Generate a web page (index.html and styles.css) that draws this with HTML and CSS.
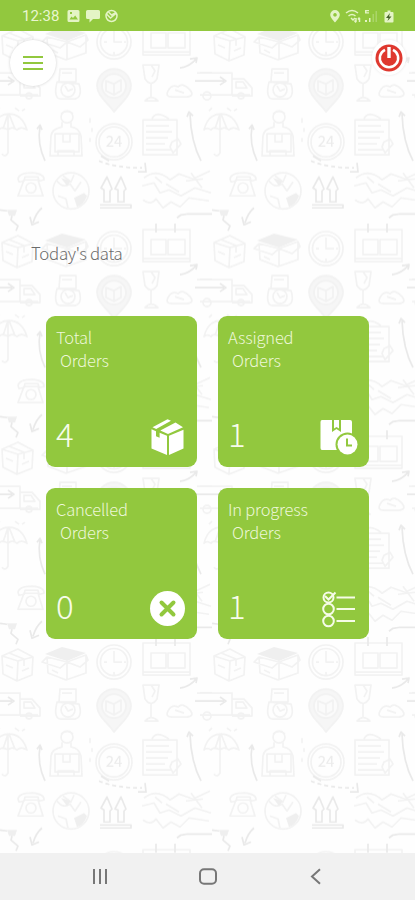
FILE: index.html
```html
<!DOCTYPE html>
<html lang="en">
<head>
<meta charset="utf-8">
<meta name="viewport" content="width=device-width, initial-scale=1">
<title>Today's data</title>
<link rel="stylesheet" href="styles.css">
</head>
<body>
<div class="screen">
  <svg class="wallpaper" width="415" height="900" aria-hidden="true">
    <defs>
      <g id="doodles">
        <path d="M2 16 18 9 33 17 32 35 17 41 3 34ZM2 16 18 21 33 17M18 21 17 41M9 13 24 19v7M6 25l7 3M22 31l7-3"/>
        <path d="M47 17 67 22 86 15v18L66 40 48 33ZM67 22v18M47 17 42 22 60 28 67 22 80 27 88 20 86 15M52 30l6 3"/>
        <path class="fill" d="M45 14 62 7 86 13 67 21Z"/>
        <circle cx="114" cy="22" r="17"/><circle cx="114" cy="22" r="13.5"/><path d="M114 11v11h8M104 22h3M114 32v3M124 22h2"/>
        <path d="M143 3h47v32h-47ZM151 13h15v15h-15ZM168 13h17v15h-17ZM143 32h47"/><path class="dark" d="M156-3v9M175-3v9"/>
        <path class="dark" d="M180 48q10-1 17-10M190 39l7-1-1 5"/>
        <path class="dark" d="M0 61h12M8 57l6 4-6 4M195 61h17M200 53h12"/>
        <path d="M-15 53H20v22h-32M20 59h12l8 9v8H20M24 62h7l4 6h-11ZM-10 75H38"/><circle cx="29" cy="76" r="3"/><circle cx="-5" cy="76" r="4"/>
        <path d="M60 49h16v13H59ZM57 62q-4 17 4 17h14q8-2 4-15ZM62 53h10"/><circle cx="68" cy="70" r="7"/><path d="M65 66l3 5 5-2"/>
        <path class="shade" d="M114 92C108 83 97 76 97 66A17 17 0 0 1 131 66C131 76 120 84 114 92Z"/><circle class="paper" cx="114" cy="66" r="12"/><path d="M106 61l8 3 7-4v11l-7 4-8-4ZM114 64v11"/>
        <path d="M143 45h16l-2 14q-6 9-12 0ZM151 64v13M145 81q6-7 13 0ZM151 45l4 6-3 6"/>
        <path d="M168 71q4-7 10-4 5-5 12 3 5 6-3 7h-15q-7 0-4-6ZM175 70l9 3"/>
        <path d="M-8 110Q-4 94 9 94T27 110Q21 106 17 110 12 106 8 110 2 106-1 110-5 107-8 110ZM8 94v39q-3 5-6 1M8 94l-5 15M9 94l6 15M15 88l4 3M-3 91l3-3M22 91l3-2"/>
        <path class="dark" d="M45 141Q37 124 40 106M37 109l3-4 2 5"/>
        <circle cx="67" cy="97" r="6"/><path d="M61 94q7-5 12 0M62 102v5q-10 2-11 9l-1 20h32l-1-20q-2-8-10-9v-5M55 114h24v18H55ZM63 114v8h7v-8M58 136v-5h16v5"/>
        <path d="M90 98v5M92 108v4M90 118v4"/>
        <circle cx="114" cy="122" r="18"/><circle cx="114" cy="122" r="15"/><text x="114" y="127">24</text><path class="dark" d="M101 136l8 5"/>
        <path d="M143 100h34v35h-34ZM152 99q4-9 17 0M146 106h23M146 112h26M146 118h22M146 124h19M146 130h25M172 122l6-3 3 5-8 9-3-6Z"/>
        <path class="dark" d="M201 141Q191 122 190 94M187 97l2-5 4 4"/>
        <path class="dark" stroke-dasharray="4 3" d="M99 141q16 7 43 7"/><path class="dark" d="M145 143l1 9h-8"/>
        <path d="M18 159q1-6 14-6 13 1 12 7l-5 1-1-4H25l-1 4-5 1ZM24 160h14l5 16H18Z"/><circle cx="31" cy="168" r="5"/>
        <circle cx="71" cy="171" r="18"/><path d="M57 161q6 8 13 3l5 7 6-9M58 176l8 3 2 9M63 156l8 6 3-7"/><path class="fill" d="M74 178l10-5 3 3q-3 9-10 11ZM61 158l10 3-4 5Z"/>
        <path class="dark" d="M104 182V170l-3-2 6-11 5 12-2 2v11ZM118 182v-12l-3-1 6-12 5 12-2 2v11ZM100 185h31v3h-31"/>
        <path d="M144 158q13-10 26 2l9-6 14 5 17-8M142 166l12-3 6 10 9-3 12 6 14-8 16 5M143 180q8 6 13-1l7 9 8-6 9 5 9-9 20 3M166 164l13 8M155 157l7 6M186 161l17-2M191 153l11 15"/>
        <path class="fill" d="M7 190h10l-2 6h-6Z"/><path class="dark" d="M12 196l-1 4 7 6-2 5M0 190l7 1"/>
        <path class="dark" d="M42 188Q36 193 33 203M30 197l2 8 7-3"/>
        <path class="dark" d="M177 198l4-3 7-1h24"/>
      </g>
      <pattern id="tile" x="0" y="640" width="212" height="206.7" patternUnits="userSpaceOnUse">
        <use href="#doodles"/><use href="#doodles" x="212"/><use href="#doodles" x="-212"/>
        <use href="#doodles" y="206.7"/><use href="#doodles" y="-206.7"/>
      </pattern>
    </defs>
    <rect width="415" height="900" fill="url(#tile)"/>
  </svg>

  <header class="status">
    <span class="clock">12:38</span>
    <svg class="status-left" width="54" height="14" viewBox="0 0 54 14">
      <path fill-rule="evenodd" d="M2 1h9q1.500 0 1.500 1.500v9Q12.500 13 11 13H2Q.5 13 .5 11.500v-9Q.5 1 2 1ZM2.500 10.500h8.500L8.200 6.500 6 9 4.500 7.500ZM3 3v2h2V3Z"/>
      <path d="M20.500 1h11q1.500 0 1.500 1.500v6q0 1.500-1.500 1.500H26l-3.500 3.500V10h-2Q19 10 19 8.500v-6Q19 1 20.500 1Z"/>
      <circle class="line" cx="44.500" cy="7" r="5.500"/><path class="line" d="M39.500 5l4 4 6-5M41.500 3l3 3 4-2"/>
    </svg>
    <svg class="status-right" width="68" height="16" viewBox="0 0 68 16">
      <path fill-rule="evenodd" d="M6 2a4.800 4.800 0 0 1 4.800 4.800C10.800 10 6 14.500 6 14.500S1.200 10 1.200 6.800A4.800 4.800 0 0 1 6 2ZM6 5a1.800 1.800 0 1 0 .01 0Z"/>
      <path class="line" d="M17 5q6-5 12 0M19.500 8q3.500-3 7 0M22 10l2 2 2-2M27 10v4M25.500 12.500l1.500 2M30.500 14v-4M29 11.500l1.500-2"/>
      <path d="M36 2h4v1.200h-2.500v1H40v1.200h-4ZM36 12h2v2h-2ZM40 10h1.500v4H40Z"/><path class="faint" d="M43.500 6H45v8h-1.500ZM46.500 3H48v11h-1.500Z"/>
      <path d="M58.500 2.500h3V4h2q1 0 1 1v8.500q0 1-1 1h-7q-1 0-1-1V5q0-1 1-1h2Z"/><path class="bolt" d="M61 5l-4 5h2.500L58.500 13l4-4.500H60Z"/>
    </svg>
  </header>

  <div class="toolbar">
    <button class="menu" aria-label="Menu"><i></i><i></i><i></i></button>
    <button class="power" aria-label="Power">
      <svg width="28" height="28" viewBox="0 0 28 28"><circle cx="14" cy="14" r="13.500" fill="#df382f"/><path d="M10 5.800A9.200 9.200 0 1 0 18 5.800" fill="none" stroke="#fff" stroke-width="2.500"/><path d="M14 3v11" stroke="#fff" stroke-width="3.400"/></svg>
    </button>
  </div>

  <main class="content">
    <h1 class="heading">Today's data</h1>
    <section class="cards">
      <article class="card">
        <h2>Total<br><span>Orders</span></h2>
        <div class="card-foot"><strong>4</strong>
          <svg width="38" height="38" viewBox="0 0 38 38"><path d="M2.500 11.300 7 13.200v5l3.600 1.500V14.700L18 17.800V37L2.500 30.500ZM20 17.800 34.500 11.800V30.500L20 37Z"/><path d="M3.500 9.300 18.500 1.300 22 2.800 7.200 10.900ZM11.300 12.500 26.500 4.600 34 9.200 19 15.900Z"/></svg>
        </div>
      </article>
      <article class="card">
        <h2>Assigned<br><span>Orders</span></h2>
        <div class="card-foot"><strong>1</strong>
          <svg width="38" height="38" viewBox="0 0 38 38"><path d="M1 2h10v12l4.500-3 4.500 3V2h9q2 0 2 2v28H1Q-.5 32-.5 30V4Q-.5 2 1 2Z"/><path d="M13 2h5v8.500L15.500 9 13 10.500Z"/><circle class="gap" cx="26.500" cy="26.500" r="12"/><circle cx="26.500" cy="26.500" r="10"/><path class="cut" d="M26 20.500v7h5"/></svg>
        </div>
      </article>
      <article class="card">
        <h2>Cancelled<br><span>Orders</span></h2>
        <div class="card-foot"><strong>0</strong>
          <svg width="38" height="38" viewBox="0 0 38 38"><circle cx="18.500" cy="18.500" r="17.500"/><path class="cross" d="M12.500 12.500 24.500 24.500M24.500 12.500 12.500 24.500"/></svg>
        </div>
      </article>
      <article class="card">
        <h2>In progress<br><span>Orders</span></h2>
        <div class="card-foot"><strong>1</strong>
          <svg width="38" height="38" viewBox="0 0 38 38"><g class="outline"><circle cx="7.500" cy="7.500" r="5"/><circle cx="7.500" cy="19" r="5.300"/><circle cx="7.500" cy="31" r="5.300"/><path d="M4 6 7.500 9.500 14.500 2.500M15.500 7.500h18.500M15.500 19h18.500M15.500 31h18.500"/></g></svg>
        </div>
      </article>
    </section>
  </main>

  <nav class="navbar">
    <svg width="20" height="20" viewBox="0 0 20 20"><path d="M4 2v15M10 2v15M16 2v15"/></svg>
    <svg width="20" height="20" viewBox="0 0 20 20"><rect x="2" y="2.300" width="16" height="14.500" rx="4"/></svg>
    <svg width="20" height="20" viewBox="0 0 20 20"><path d="M14 2.300 6 9.500 14 16.700"/></svg>
  </nav>
</div>
</body>
</html>
```
FILE: styles.css
```css
* { box-sizing: border-box; }

body {
  margin: 0;
  background: #fefefe;
  font-family: "Noto Sans CJK SC", "Noto Sans", sans-serif;
}

.screen {
  position: relative;
  isolation: isolate;
  display: flex;
  flex-direction: column;
  height: 900px;
  overflow: hidden;
}

.wallpaper { position: absolute; inset: 0; z-index: -1; filter: blur(0.6px); }
#doodles { fill: none; stroke: #f2f2f2; stroke-width: 1.7; stroke-linejoin: round; }
#doodles .dark { stroke: #e9e9e9; }
#doodles .fill { fill: #efefef; stroke: none; }
#doodles .shade { fill: #f6f6f6; }
#doodles .paper { fill: #fbfbfb; }
#doodles text { fill: #ebebeb; stroke: none; font-size: 15px; text-anchor: middle; }

.status {
  display: flex;
  align-items: center;
  height: 31px;
  padding: 1px 18px 0 22px;
  background: #92c83e;
  color: #e9f6cf;
  font: 15px/30px Roboto, sans-serif;
}
.clock { width: 45px; }
.status svg { fill: #e4f4c5; }
.status .line { fill: none; stroke: #e4f4c5; stroke-width: 1.5; }
.status .faint { fill: #aad569; }
.status .bolt { fill: #44622a; }
.status-right { margin-left: auto; }

.toolbar {
  display: flex;
  justify-content: space-between;
  height: 70px;
  padding: 9px 9px 0 10px;
}
.toolbar button { border: 0; padding: 0; border-radius: 50%; background: #fff; }
.menu {
  display: flex;
  flex-direction: column;
  align-items: center;
  justify-content: center;
  gap: 4px;
  width: 46px;
  height: 46px;
  box-shadow: 0 0 3px #cfcfcf;
}
.menu i { width: 20px; height: 2px; background: #92c83e; }
.power {
  display: grid;
  place-items: center;
  width: 34px;
  height: 35px;
  box-shadow: 0 0 3px #e9e9e9;
}

.content { flex: 1; padding: 140px 46px 0; }
.heading {
  margin: 0 0 51px -15px;
  color: #6c6c6c;
  font-size: 16.800px;
  font-weight: 300;
  line-height: 24px;
  letter-spacing: -0.300px;
}

.cards {
  display: grid;
  grid-template-columns: 151px 151px;
  grid-auto-rows: 151px;
  gap: 21px;
}
.card {
  display: flex;
  flex-direction: column;
  justify-content: space-between;
  padding: 10px 10px 11px;
  border-radius: 9px;
  background: #92c83e;
  color: #edf7d8;
}
.card h2 {
  margin: 0;
  font-size: 16.500px;
  font-weight: 300;
  line-height: 22.500px;
  letter-spacing: -0.200px;
}
.card h2 span { margin-left: 4px; }
.card-foot { display: flex; align-items: flex-end; justify-content: space-between; }
.card strong {
  padding-bottom: 4px;
  font-size: 33px;
  font-weight: 300;
  line-height: 38px;
  color: #f7fcea;
}
.card svg { fill: #fff; overflow: visible; }
.card .gap { fill: #92c83e; }
.card .cut { fill: none; stroke: #92c83e; stroke-width: 2; }
.card .cross { stroke: #92c83e; stroke-width: 4; stroke-linecap: round; }
.card .outline { fill: none; stroke: #f6fce8; stroke-width: 2; }

.navbar {
  display: flex;
  align-items: center;
  justify-content: center;
  gap: 88px;
  height: 47px;
  background: #f1f1f1;
}
.navbar svg { fill: none; stroke: #777; stroke-width: 2; }
```
